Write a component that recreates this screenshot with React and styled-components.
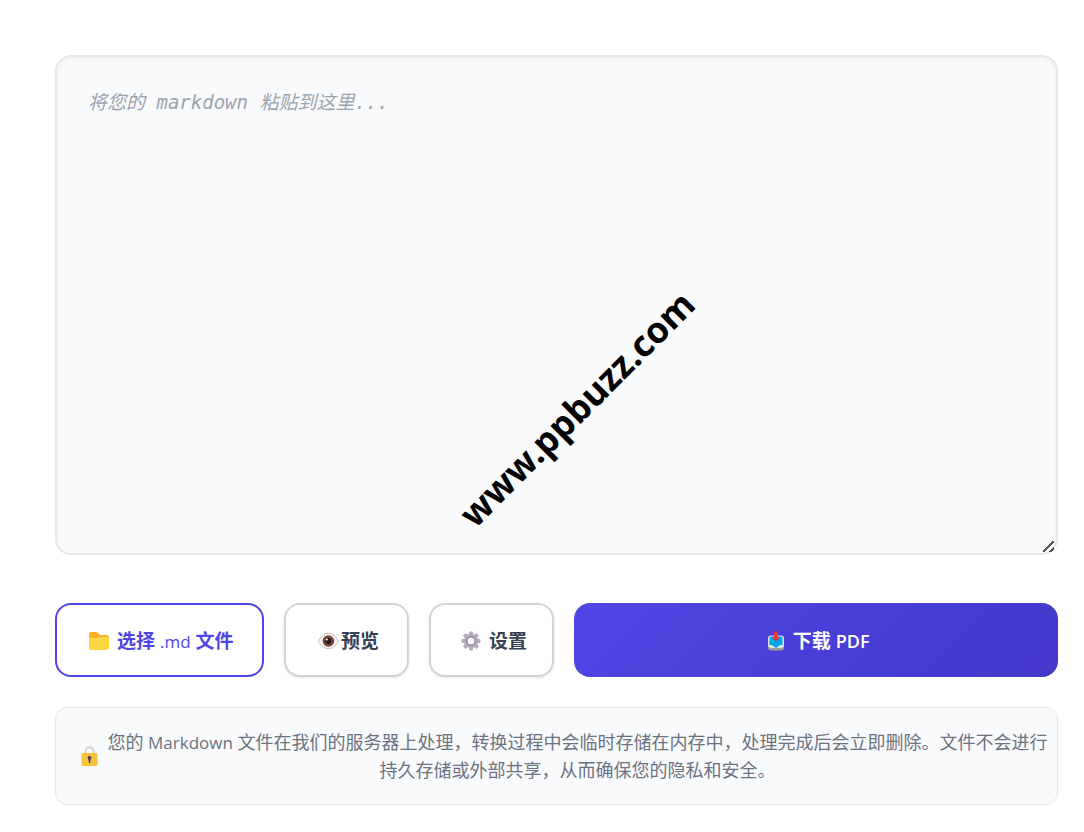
import React, { useRef, useState } from "react";
import styled, { createGlobalStyle } from "styled-components";

const GlobalStyle = createGlobalStyle`
  *, *::before, *::after {
    box-sizing: border-box;
  }
  body {
    margin: 0;
    background-color: #fff;
    font-family: "Open Sans", "Noto Sans CJK SC", sans-serif;
  }
`;

const Page = styled.main`
  position: relative;
  display: flex;
  flex-direction: column;
  padding: 55px 26px 24px 55px;
`;

const Editor = styled.textarea`
  display: block;
  width: 100%;
  height: 500px;
  margin-bottom: 48px;
  padding: 31px;
  border: 2px solid #e5e7eb;
  border-radius: 16px;
  outline: none;
  resize: vertical;
  background-color: #f9fafc;
  box-shadow: inset 0 2px 4px rgba(0, 0, 0, 0.05);
  color: #374151;
  font-family: "DejaVu Sans Mono", "Noto Sans CJK SC", monospace;
  font-size: 19px;
  line-height: 28px;
  &::placeholder {
    color: #9ca3af;
    font-style: italic;
    opacity: 1;
  }
  &::-webkit-resizer {
    background: linear-gradient(
        135deg,
        transparent 7px,
        #555 7px,
        #555 9px,
        transparent 9px,
        transparent 12px,
        #555 12px,
        #555 14px,
        transparent 14px
      )
      2px 3px / 11px 11px no-repeat;
  }
`;

const Watermark = styled.div`
  position: absolute;
  top: 409px;
  left: 577px;
  transform: translate(-50%, -50%) rotate(-45deg);
  color: #000;
  font-family: "Noto Sans", sans-serif;
  font-size: 36px;
  font-weight: 700;
  line-height: 40px;
  white-space: nowrap;
  pointer-events: none;
`;

const Toolbar = styled.div`
  display: flex;
  gap: 20px;
  margin-bottom: 30px;
`;

const Button = styled.button`
  display: flex;
  align-items: center;
  justify-content: center;
  gap: ${({ $gap }) => $gap || 8}px;
  height: 74px;
  min-width: 125px;
  padding: 2px ${({ $padding }) => $padding || 24}px 0;
  border: 2px solid #d1d5db;
  border-radius: 16px;
  background-color: #fff;
  box-shadow: 0 1px 3px rgba(0, 0, 0, 0.1);
  color: #374151;
  font-family: inherit;
  font-size: 19px;
  font-weight: 700;
  line-height: 28px;
  white-space: nowrap;
  cursor: pointer;
`;

const FileButton = styled(Button)`
  border-color: #4f46e5;
  box-shadow: none;
  color: #4f46e5;
`;

const DownloadButton = styled(Button)`
  flex: 1;
  border: none;
  background: linear-gradient(135deg, #4f46e5, #4338ca);
  box-shadow: none;
  color: #fff;
`;

const Latin = styled.span`
  font-size: ${({ $size }) => $size || 17}px;
  font-weight: ${({ $weight }) => $weight || 400};
  line-height: 1;
`;

const Notice = styled.div`
  display: flex;
  align-items: center;
  gap: 8px;
  padding: 20px 8px 20px 25px;
  border: 1px solid #e5e7eb;
  border-radius: 12px;
  background-color: #f9fafc;
`;

const NoticeText = styled.p`
  flex: 1;
  margin: 0;
  color: #6b7280;
  font-size: 18px;
  line-height: 28px;
  text-align: center;
`;

const Icon = styled.svg`
  flex: none;
  display: block;
`;

const FolderIcon = () => (
  <Icon width="23" height="20" viewBox="-3 0 23 20" aria-hidden="true">
    <path d="M0 3q0-2 2-2h5q1 0 1.600.600L10.800 4H18q2 0 2 2v4H0z" fill="#ffb02e" />
    <path d="M0 8q0-1 1-1h7q1 0 2-1h8.500Q20 6 20 7.500V17q0 2-2 2H2q-2 0-2-2z" fill="#fcd53f" />
  </Icon>
);

const EyeIcon = () => (
  <Icon width="24" height="20" viewBox="0 0 24 20" aria-hidden="true">
    <path
      d="M3.400 10q4-7.800 10-7.800t10 7.800q-4 7.800-10 7.800T3.400 10z"
      fill="#f7f7f7"
      stroke="#b4b4b8"
      strokeWidth=".8"
    />
    <circle cx="13.400" cy="10" r="5.800" fill="#7d4533" />
    <circle cx="13.400" cy="10" r="3" fill="#1c1c1c" />
    <circle cx="11.800" cy="8.400" r="1" fill="#fff" />
  </Icon>
);

const TEETH = [0, 45, 90, 135, 180, 225, 270, 315];

const GearIcon = () => (
  <Icon width="24" height="20" viewBox="-4 0 24 20" aria-hidden="true">
    {TEETH.map((angle) => (
      <rect
        key={angle}
        x="8"
        y="0.500"
        width="4"
        height="5"
        rx="1"
        fill="#b4acbc"
        transform={`rotate(${angle} 10 10)`}
      />
    ))}
    <circle cx="10" cy="10" r="5.400" fill="none" stroke="#b4acbc" strokeWidth="3.600" />
    <circle cx="10" cy="10" r="4.300" fill="none" stroke="#998ea4" strokeWidth="1.600" />
  </Icon>
);

const InboxIcon = () => (
  <Icon width="22" height="20" viewBox="-4 0 22 20" aria-hidden="true">
    <rect x="1" y="5" width="16" height="14.500" rx="3" fill="#9b9b9b" />
    <rect x="1" y="4.500" width="16" height="12.500" rx="3" fill="#e1e1e6" />
    <path d="M4 5.500h10q1.500 0 1.500 1.500v7H13l-4 3-4-3H2.500V7Q2.500 5.500 4 5.500z" fill="#00a6ed" />
    <path d="M7.200.5h3.600V6h2.400L9 10.200 4.800 6h2.400z" fill="#f8312f" />
  </Icon>
);

const LockIcon = () => (
  <Icon width="17" height="20" viewBox="0 0 17 20" aria-hidden="true">
    <path d="M4.500 8V5.200a4 4 0 0 1 8 0V8" fill="none" stroke="#d3d3d3" strokeWidth="2" />
    <rect x=".5" y="7" width="16" height="13" rx="1.500" fill="#f9c23c" />
    <circle cx="8.500" cy="11.800" r="1.900" fill="#433b6b" />
    <rect x="7.700" y="12" width="1.600" height="5" rx=".8" fill="#433b6b" />
  </Icon>
);

const App = () => {
  const [markdown, setMarkdown] = useState("");
  const fileInput = useRef(null);

  const onFileChange = async (e) => {
    const file = e.target.files[0];
    if (file) {
      setMarkdown(await file.text());
    }
  };

  return (
    <Page>
      <GlobalStyle />
      <Editor
        aria-label="Markdown"
        placeholder="将您的 markdown 粘贴到这里..."
        value={markdown}
        onChange={(e) => setMarkdown(e.target.value)}
      />
      <Watermark>www.ppbuzz.com</Watermark>
      <input ref={fileInput} type="file" accept=".md" hidden onChange={onFileChange} />
      <Toolbar>
        <FileButton type="button" $padding={29} onClick={() => fileInput.current.click()}>
          <FolderIcon />
          <span>
            选择 <Latin $weight={500}>.md</Latin> 文件
          </span>
        </FileButton>
        <Button type="button" $gap={2}>
          <EyeIcon />
          预览
        </Button>
        <Button type="button">
          <GearIcon />
          设置
        </Button>
        <DownloadButton type="button">
          <InboxIcon />
          <span>
            下载{" "}
            <Latin $size={18} $weight={600}>
              PDF
            </Latin>
          </span>
        </DownloadButton>
      </Toolbar>
      <Notice>
        <LockIcon />
        <NoticeText>
          您的 <Latin>Markdown</Latin> 文件在我们的服务器上处理，转换过程中会临时存储在内存中，处理完成后会立即删除。文件不会进行持久存储或外部共享，从而确保您的隐私和安全。
        </NoticeText>
      </Notice>
    </Page>
  );
};

export default App;
